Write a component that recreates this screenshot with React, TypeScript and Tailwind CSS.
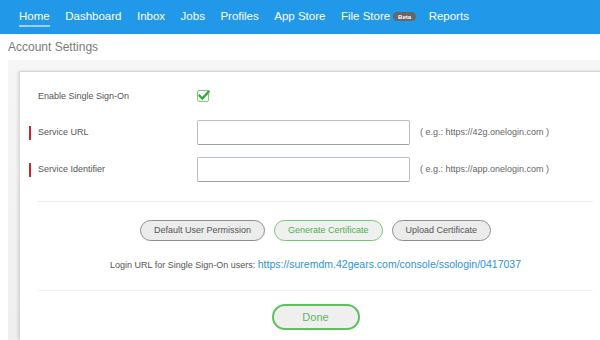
import React, { useState } from "react";

const navItems = ["Home", "Dashboard", "Inbox", "Jobs", "Profiles", "App Store", "File Store", "Reports"];

function CheckBox({ checked }: { checked: boolean }) {
  return (
    <svg width="14" height="14" viewBox="0 0 14 14" className="block">
      <rect x="0.5" y="1.5" width="11" height="11" rx="1.5" fill="#fff" stroke="#7ccf7c" strokeWidth="1" />
      {checked && (
        <path d="M2.6 6.8 L5.4 9.6 L11.6 2.6" fill="none" stroke="#3aa83a" strokeWidth="2.4" strokeLinecap="square" />
      )}
    </svg>
  );
}

export default function App() {
  const [sso, setSso] = useState(true);
  const [serviceUrl, setServiceUrl] = useState("");
  const [serviceId, setServiceId] = useState("");

  return (
    <div className="w-[600px] h-[340px] overflow-hidden bg-white font-['Liberation_Sans',Arial,sans-serif]">
      {/* Top nav */}
      <div className="h-[34px] bg-[#2299e8] flex items-center pl-[19px] gap-[15.5px] text-[11.5px] text-white">
        {navItems.map(n => (
          <div key={n} className="relative flex items-center h-full -mt-[1px]">
            <span>{n}</span>
            {n === "File Store" && (
              <span className="ml-[3px] -mr-[3px] bg-[#666] rounded-full h-[9px] w-[23px] text-[6px] font-bold text-white flex items-center justify-center leading-none">
                Beta
              </span>
            )}
            {n === "Home" && <div className="absolute left-0 right-0 top-[25px] h-[2px] bg-[#9fd0f5]" />}
          </div>
        ))}
      </div>

      {/* Page title */}
      <div className="h-[26px] flex items-center pl-2 text-[12px] text-[#7a7a7a]">Account Settings</div>

      {/* Panel */}
      <div className="ml-2 h-[280px] bg-gradient-to-b from-[#f6f6f6] to-[#efefef] pt-[11px] pl-[12px] overflow-hidden">
        <div className="w-[591px] h-full bg-white border-t border-[#d4d4d4] shadow-[-2px_0_3px_rgba(0,0,0,0.13)] px-[18px] pt-[12px]">
          {/* Enable SSO */}
          <div className="flex items-center h-[25px] text-[9px] text-[#555]">
            <div className="w-[159px]">Enable Single Sign-On</div>
            <button onClick={() => setSso(!sso)} className="-mt-[2px]">
              <CheckBox checked={sso} />
            </button>
          </div>

          {/* Service URL */}
          <div className="flex items-center h-[25px] mt-[11px] -ml-[9px] text-[9px] text-[#555]">
            <div className="w-[9px]"><div className="w-[1.5px] h-[14px] bg-[#c8262c]" /></div>
            <div className="w-[159px]">Service URL</div>
            <input
              value={serviceUrl}
              onChange={e => setServiceUrl(e.target.value)}
              className="w-[213px] h-[25px] border border-[#b9bfc6] border-b-[#9aa0a8] rounded-[2px] px-2 text-[10px] outline-none"
            />
            <div className="ml-[10px] text-[#666]">( e.g.: https://42g.onelogin.com )</div>
          </div>

          {/* Service Identifier */}
          <div className="flex items-center h-[25px] mt-[12px] -ml-[9px] text-[9px] text-[#555]">
            <div className="w-[9px]"><div className="w-[1.5px] h-[14px] bg-[#c8262c]" /></div>
            <div className="w-[159px]">Service Identifier</div>
            <input
              value={serviceId}
              onChange={e => setServiceId(e.target.value)}
              className="w-[213px] h-[25px] border border-[#b9bfc6] border-b-[#9aa0a8] rounded-[2px] px-2 text-[10px] outline-none"
            />
            <div className="ml-[10px] text-[#666]">( e.g.: https://app.onelogin.com )</div>
          </div>

          <div className="mt-[19px] border-t border-[#ececec]" />

          {/* Certificate buttons */}
          <div className="mt-[18px] flex justify-center gap-[9px] text-[9px]">
            <button className="h-[21px] px-[13px] rounded-full border border-[#8c8c94] bg-[#ececec] text-[#555]">Default User Permission</button>
            <button className="h-[21px] px-[13px] rounded-full border border-[#72c872] bg-[#f0f0f0] text-[#4caf50]">Generate Certificate</button>
            <button className="h-[21px] px-[13px] rounded-full border border-[#8c8c94] bg-[#ececec] text-[#555]">Upload Certificate</button>
          </div>

          <div className="mt-[17px] text-center text-[9px] text-[#555] leading-[13px]">
            Login URL for Single Sign-On users:{" "}
            <a className="text-[10.5px] text-[#2a92e0]">https://suremdm.42gears.com/console/ssologin/0417037</a>
          </div>

          <div className="mt-[18px] border-t border-[#f0f0f0]" />

          <div className="mt-[13px] flex justify-center">
            <button className="w-[88px] h-[26px] rounded-full border-2 border-[#5cc25c] bg-[#efefef] text-[11px] text-[#5cb85c]">Done</button>
          </div>
        </div>
      </div>
    </div>
  );
}
